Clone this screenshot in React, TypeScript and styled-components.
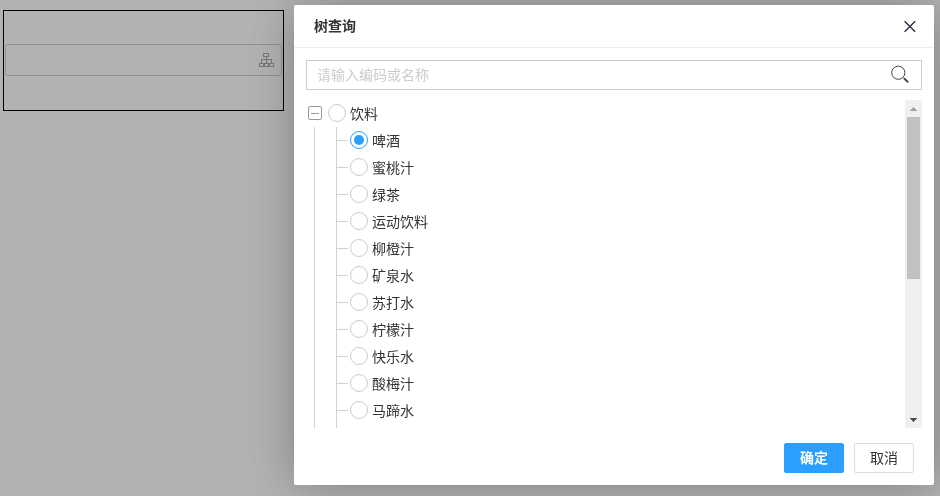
import React, { useState } from "react";
import styled, { createGlobalStyle } from "styled-components";

const GlobalStyle = createGlobalStyle`
  *, *::before, *::after { box-sizing: border-box; }
  body {
    margin: 0;
    background: #fff;
    color: #333;
    font: 14px/20px "Noto Sans CJK SC", sans-serif;
  }
  button, input { font: inherit; color: inherit; margin: 0; }
`;

const Page = styled.main`
  padding: 10px 3px;
`;

const Panel = styled.section`
  width: 100%;
  max-width: 281px;
  padding: 33px 1px 34px;
  border: 1px solid #000;
`;

const Field = styled.div`
  display: flex;
  align-items: center;
  height: 32px;
  padding-right: 7px;
  border: 1px solid #d2d2d2;
  border-radius: 2px;
`;

const FieldInput = styled.input`
  flex: 1;
  min-width: 0;
  height: 100%;
  padding: 0 10px;
  border: 0;
  outline: 0;
  background: transparent;
`;

const IconButton = styled.button<{ $tone: string }>`
  display: flex;
  padding: 0;
  border: 0;
  background: none;
  color: ${(p) => p.$tone};
  cursor: pointer;
`;

const Overlay = styled.div`
  position: fixed;
  inset: 0;
  display: flex;
  justify-content: flex-end;
  align-items: flex-start;
  padding: 5px 6px;
  background: rgba(0, 0, 0, 0.3);
`;

const Dialog = styled.div`
  width: 100%;
  max-width: 640px;
  border-radius: 2px;
  background: #fff;
  box-shadow: 1px 1px 50px rgba(0, 0, 0, 0.3);
`;

const Header = styled.header`
  display: flex;
  align-items: center;
  justify-content: space-between;
  height: 43px;
  padding: 0 17px 0 20px;
  border-bottom: 1px solid #eee;
`;

const Title = styled.h2`
  margin: 0;
  padding-bottom: 2px;
  font-size: 14px;
  font-weight: 700;
`;

const Body = styled.div`
  display: flex;
  flex-direction: column;
  gap: 10px;
  padding: 12px 12px 0;
`;

const SearchBox = styled.div`
  display: flex;
  align-items: center;
  height: 30px;
  padding-right: 11px;
  border: 1px solid #ccc;
`;

const SearchInput = styled(FieldInput)`
  padding-bottom: 2px;
  &::placeholder { color: #ccc; opacity: 1; }
`;

const TreeArea = styled.div`
  display: flex;
  height: 328px;
`;

const TreeScroll = styled.div`
  flex: 1;
  min-width: 0;
  overflow-y: auto;
  scrollbar-width: none;
`;

const Tree = styled.ul`
  display: flex;
  flex-direction: column;
  min-height: 100%;
  margin: 0;
  padding: 0;
  list-style: none;
`;

const RootItem = styled.li`
  flex: 1;
  display: flex;
  flex-direction: column;
`;

const RootRow = styled.div`
  display: flex;
  align-items: center;
  gap: 6px;
  height: 27px;
  padding: 0 0 1px 2px;
`;

const Expander = styled.button`
  display: flex;
  align-items: center;
  justify-content: center;
  width: 14px;
  height: 14px;
  padding: 0;
  border: 1px solid #999;
  border-radius: 2px;
  background: #fff;
  cursor: pointer;
  &::before { content: ""; width: 8px; height: 1px; background: #999; }
`;

const Guide = styled.div`
  flex: 1;
  display: flex;
  margin-left: 8px;
  padding-left: 21px;
  border-left: 1px solid #d2d2d2;
`;

const Children = styled.ul`
  flex: 1;
  margin: 0;
  padding: 0;
  border-left: 1px solid #d2d2d2;
  list-style: none;
`;

const ChildItem = styled.li`
  display: flex;
  align-items: center;
  gap: 2px;
  height: 27px;
  padding-bottom: 1px;
  &::before { content: ""; width: 11px; height: 1px; background: #d2d2d2; }
`;

const Option = styled.label`
  display: flex;
  align-items: center;
  gap: 4px;
  cursor: pointer;
`;

const Radio = styled.input`
  appearance: none;
  flex: none;
  display: grid;
  place-items: center;
  width: 18px;
  height: 18px;
  border: 1px solid #ccc;
  border-radius: 50%;
  background: #fff;
  &:checked { border-color: #2a9fff; }
  &:checked::before {
    content: "";
    width: 10px;
    height: 10px;
    border-radius: 50%;
    background: #2a9fff;
  }
`;

const Scrollbar = styled.div`
  display: flex;
  flex-direction: column;
  width: 17px;
  background: #f0f0f0;
`;

const ScrollButton = styled.button<{ $tone: string }>`
  display: flex;
  align-items: center;
  justify-content: center;
  height: 17px;
  padding: 0;
  border: 0;
  background: none;
  color: ${(p) => p.$tone};
`;

const Track = styled.div`
  flex: 1;
  padding: 0 2px;
`;

const Thumb = styled.div`
  height: 55%;
  background: #c1c1c1;
`;

const Footer = styled.footer`
  display: flex;
  justify-content: flex-end;
  gap: 10px;
  padding: 15px 20px 12px;
`;

const Button = styled.button<{ $primary?: boolean }>`
  width: 60px;
  height: 30px;
  padding: 0 0 2px;
  border: 1px solid ${(p) => (p.$primary ? "#2a9fff" : "#ddd")};
  border-radius: 2px;
  background: ${(p) => (p.$primary ? "#2a9fff" : "#fff")};
  color: ${(p) => (p.$primary ? "#fff" : "#333")};
  font-weight: ${(p) => (p.$primary ? 700 : 400)};
  cursor: pointer;
`;

const drinks = [
  "啤酒", "蜜桃汁", "绿茶", "运动饮料", "柳橙汁", "矿泉水",
  "苏打水", "柠檬汁", "快乐水", "酸梅汁", "马蹄水",
];

const HierarchyIcon = () => (
  <svg width="15" height="15" viewBox="0 0 15 15" fill="none" stroke="currentColor" aria-hidden="true">
    <rect x="4.5" y="0.5" width="5" height="3" />
    <path d="M7.5 3.5V10.5M2.5 10.5V6.5H12.5V10.5" />
    <rect x="0.5" y="10.5" width="4" height="3" />
    <rect x="5.5" y="10.5" width="4" height="3" />
    <rect x="10.5" y="10.5" width="4" height="3" />
  </svg>
);

const CloseIcon = () => (
  <svg width="14" height="14" viewBox="0 0 14 14" fill="none" stroke="currentColor" strokeWidth="1.4" aria-hidden="true">
    <path d="M1.6 2.2L12.2 12.8M12.2 2.2L1.6 12.8" />
  </svg>
);

const SearchIcon = () => (
  <svg width="20" height="20" viewBox="0 0 20 20" fill="none" stroke="currentColor" aria-hidden="true">
    <circle cx="8.3" cy="7.7" r="6.6" />
    <path d="M13 12.5L14 13.5" />
    <path d="M14 13.3L18.2 17.4" strokeWidth="2" />
  </svg>
);

const Arrow = ({ down }: { down?: boolean }) => (
  <svg width="7" height="4" viewBox="0 0 7 4" fill="currentColor" shapeRendering="crispEdges" aria-hidden="true">
    <path
      d={
        down
          ? "M0 0H7V1H6V2H5V3H4V4H3V3H2V2H1V1H0Z"
          : "M0 4H7V3H6V2H5V1H4V0H3V1H2V2H1V3H0Z"
      }
    />
  </svg>
);

export default function App() {
  const [selected, setSelected] = useState("啤酒");
  const option = (name: string) => (
    <Option>
      <Radio type="radio" name="drink" checked={selected === name} onChange={() => setSelected(name)} />
      <span>{name}</span>
    </Option>
  );

  return (
    <>
      <GlobalStyle />
      <Page>
        <Panel>
          <Field>
            <FieldInput type="text" aria-label="树查询" />
            <IconButton type="button" $tone="#acacac" aria-label="树查询">
              <HierarchyIcon />
            </IconButton>
          </Field>
        </Panel>
      </Page>
      <Overlay>
        <Dialog role="dialog" aria-modal="true" aria-labelledby="dialog-title">
          <Header>
            <Title id="dialog-title">树查询</Title>
            <IconButton type="button" $tone="#2e2d3c" aria-label="关闭">
              <CloseIcon />
            </IconButton>
          </Header>
          <Body>
            <SearchBox>
              <SearchInput type="text" placeholder="请输入编码或名称" aria-label="请输入编码或名称" />
              <IconButton type="button" $tone="#444" aria-label="查询">
                <SearchIcon />
              </IconButton>
            </SearchBox>
            <TreeArea>
              <TreeScroll>
                <Tree>
                  <RootItem>
                    <RootRow>
                      <Expander type="button" aria-label="饮料" aria-expanded="true" />
                      {option("饮料")}
                    </RootRow>
                    <Guide>
                      <Children>
                        {drinks.map((name) => (
                          <ChildItem key={name}>{option(name)}</ChildItem>
                        ))}
                      </Children>
                    </Guide>
                  </RootItem>
                </Tree>
              </TreeScroll>
              <Scrollbar>
                <ScrollButton type="button" $tone="#a3a3a3" aria-label="向上">
                  <Arrow />
                </ScrollButton>
                <Track>
                  <Thumb />
                </Track>
                <ScrollButton type="button" $tone="#505050" aria-label="向下">
                  <Arrow down />
                </ScrollButton>
              </Scrollbar>
            </TreeArea>
          </Body>
          <Footer>
            <Button type="button" $primary>确定</Button>
            <Button type="button">取消</Button>
          </Footer>
        </Dialog>
      </Overlay>
    </>
  );
}
